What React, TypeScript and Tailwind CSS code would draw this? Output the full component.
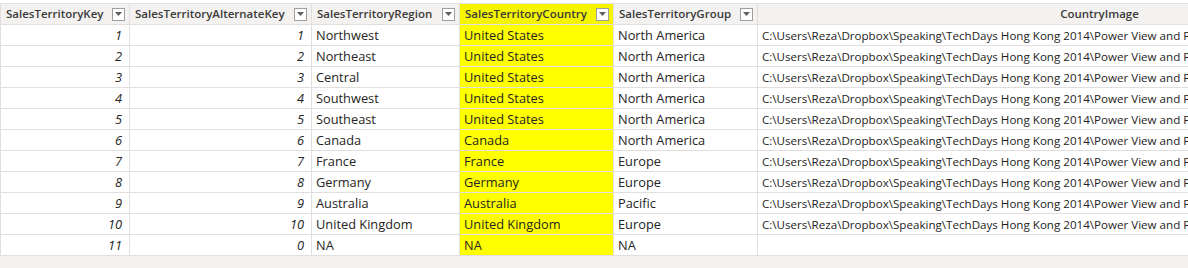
import React from 'react'

type Row = {
  key: number
  alt: number
  region: string
  country: string
  group: string
  image: string
}

const IMG = 'C:\\Users\\Reza\\Dropbox\\Speaking\\TechDays Hong Kong 2014\\Power View and Power Map\\Flags\\'

const rows: Row[] = [
  { key: 1, alt: 1, region: 'Northwest', country: 'United States', group: 'North America', image: IMG + 'USA.png' },
  { key: 2, alt: 2, region: 'Northeast', country: 'United States', group: 'North America', image: IMG + 'USA.png' },
  { key: 3, alt: 3, region: 'Central', country: 'United States', group: 'North America', image: IMG + 'USA.png' },
  { key: 4, alt: 4, region: 'Southwest', country: 'United States', group: 'North America', image: IMG + 'USA.png' },
  { key: 5, alt: 5, region: 'Southeast', country: 'United States', group: 'North America', image: IMG + 'USA.png' },
  { key: 6, alt: 6, region: 'Canada', country: 'Canada', group: 'North America', image: IMG + 'Canada.png' },
  { key: 7, alt: 7, region: 'France', country: 'France', group: 'Europe', image: IMG + 'France.png' },
  { key: 8, alt: 8, region: 'Germany', country: 'Germany', group: 'Europe', image: IMG + 'Germany.png' },
  { key: 9, alt: 9, region: 'Australia', country: 'Australia', group: 'Pacific', image: IMG + 'Australia.png' },
  { key: 10, alt: 10, region: 'United Kingdom', country: 'United Kingdom', group: 'Europe', image: IMG + 'UK.png' },
  { key: 11, alt: 0, region: 'NA', country: 'NA', group: 'NA', image: '' },
]

const cols = 'grid grid-cols-[129px_182px_148px_154px_144px_684px]'
const cell = 'h-[21px] border-r border-b border-[#e1dfdd] overflow-hidden whitespace-nowrap flex items-center'

function FilterButton() {
  return (
    <span className="ml-auto mr-[4px] flex h-[13px] w-[13px] shrink-0 items-center justify-center border border-[#a19f9d] bg-white">
      <svg width="7" height="4" viewBox="0 0 7 4">
        <path d="M0 0h7L3.5 4z" fill="#605e5c" />
      </svg>
    </span>
  )
}

function HeaderCell({ label, yellow }: { label: string; yellow?: boolean }) {
  return (
    <div className={`${cell} pl-[5px] font-semibold text-[11.5px] text-[#3b3a39] ${yellow ? 'bg-[#f5f500]' : 'bg-[#f3f2f1]'}`}>
      <span>{label}</span>
      <FilterButton />
    </div>
  )
}

export default function App() {
  return (
    <div
      className="w-[1188px] h-[268px] overflow-hidden bg-[#f3f2f1]"
      style={{ fontFamily: '"Segoe UI", "Open Sans", "Noto Sans", sans-serif' }}
    >
      <div className="h-[3px] bg-white" />
      <div className="w-max border-t border-l border-[#e1dfdd] bg-white">
        <div className={cols}>
          <HeaderCell label="SalesTerritoryKey" />
          <HeaderCell label="SalesTerritoryAlternateKey" />
          <HeaderCell label="SalesTerritoryRegion" />
          <HeaderCell label="SalesTerritoryCountry" yellow />
          <HeaderCell label="SalesTerritoryGroup" />
          <div className={`${cell} justify-center bg-[#f3f2f1] font-semibold text-[11.5px] text-[#3b3a39]`}>
            CountryImage
          </div>
        </div>

        {rows.map((r) => (
          <div key={r.key} className={`${cols} text-[12.8px] text-[#252423]`}>
            <div className={`${cell} justify-end pr-[7px] pt-[2px] italic`}>{r.key}</div>
            <div className={`${cell} justify-end pr-[7px] pt-[2px] italic`}>{r.alt}</div>
            <div className={`${cell} pl-[4px] pt-[2px]`}>{r.region}</div>
            <div className={`${cell} pl-[4px] pt-[2px] bg-[#ffff00]`}>{r.country}</div>
            <div className={`${cell} pl-[4px] pt-[2px]`}>{r.group}</div>
            <div className={`${cell} pl-[4px] pt-[2px] text-[11.6px]`}>{r.image}</div>
          </div>
        ))}
      </div>
    </div>
  )
}
